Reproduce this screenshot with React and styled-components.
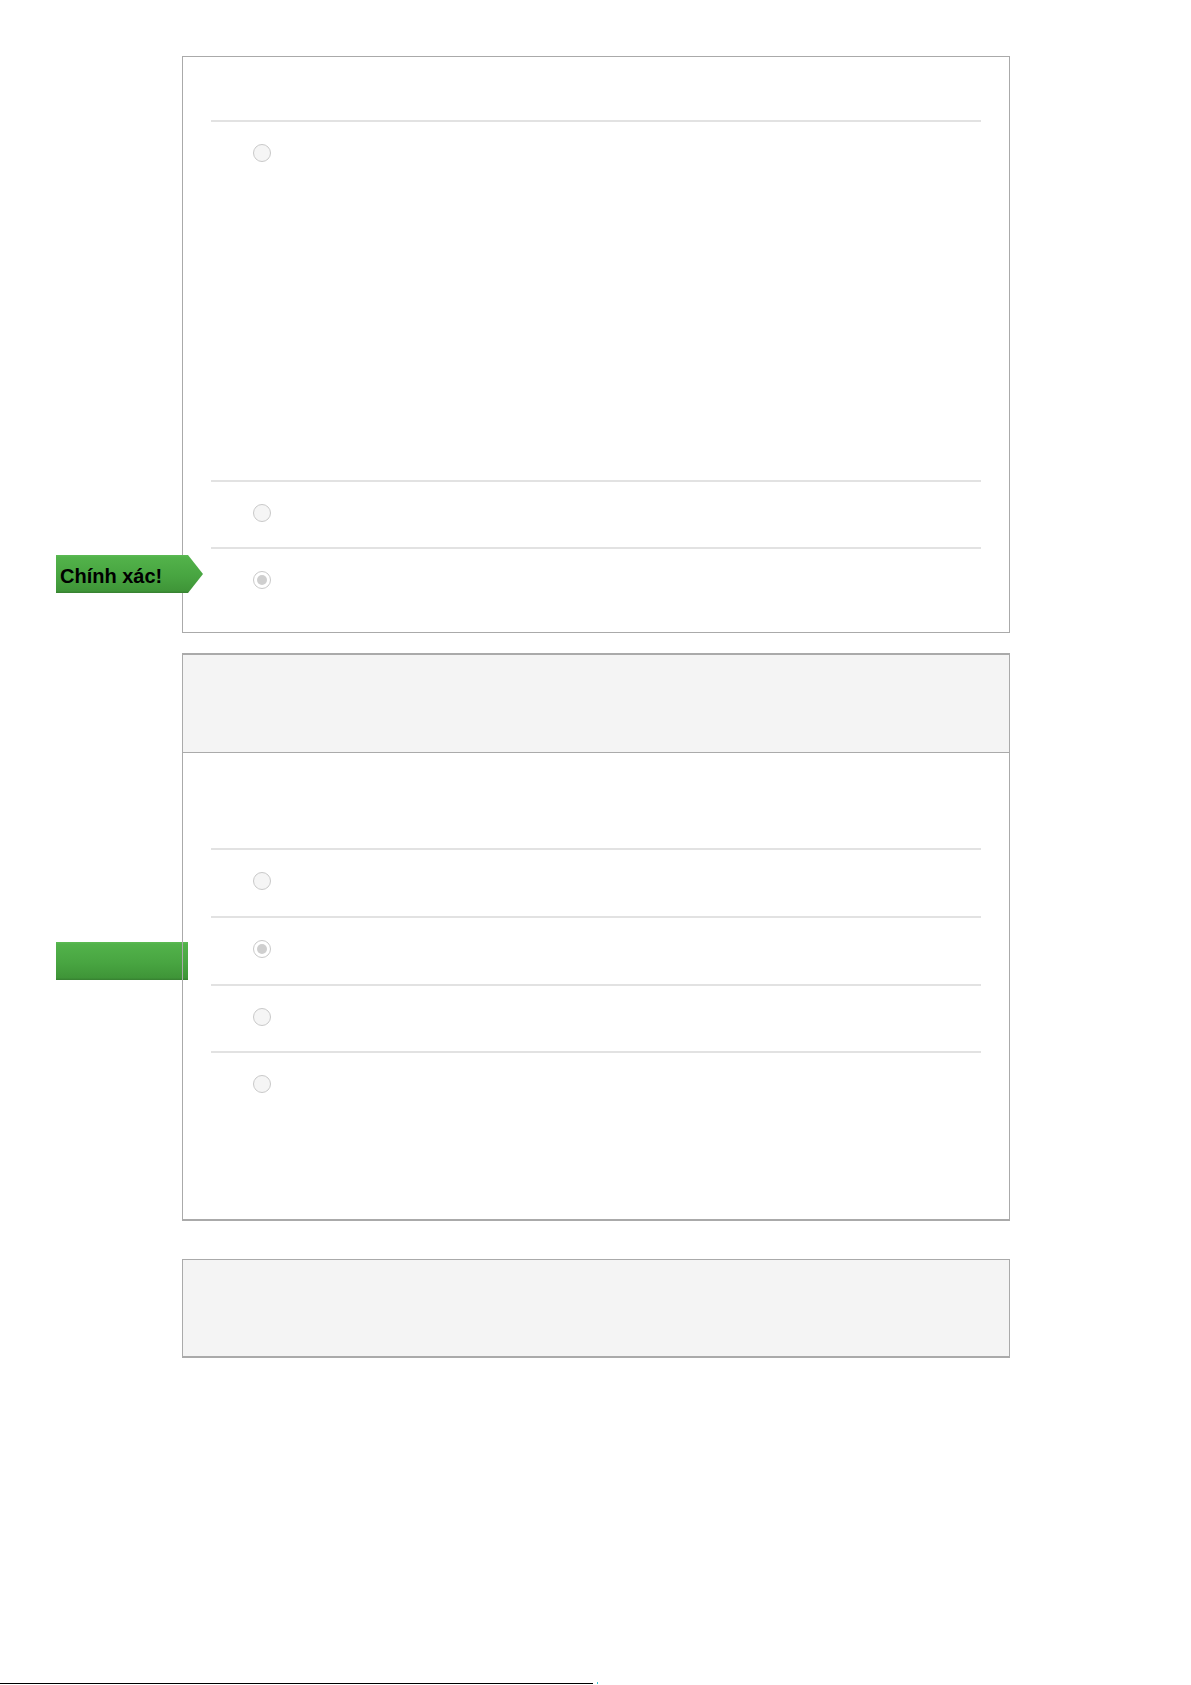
import React from "react";
import styled, { createGlobalStyle } from "styled-components";

const GlobalStyle = createGlobalStyle`
  html, body {
    margin: 0;
    padding: 0;
    background: #ffffff;
    font-family: "Liberation Sans", Arial, sans-serif;
  }
`;

const Page = styled.div`
  min-height: 1685px;
  display: flex;
  flex-direction: column;
  box-sizing: border-box;
  padding-top: 56px;
`;

const Column = styled.div`
  width: 828px;
  margin-left: 182px;
  display: flex;
  flex-direction: column;
`;

const Card = styled.section`
  position: relative;
  box-sizing: border-box;
  background: #ffffff;
  border: 1px solid #aaaaaa;
  border-top-width: ${(p) => p.$topWidth || 1}px;
  border-bottom-width: ${(p) => p.$bottomWidth || 1}px;
  margin-bottom: ${(p) => p.$gap || 0}px;
`;

const CardHeader = styled.div`
  height: 97px;
  background: #f4f4f4;
  border-bottom: 1px solid #aaaaaa;
`;

const Footnote = styled.div`
  height: 96px;
  background: #f4f4f4;
`;

const CardBody = styled.div`
  padding: 0 28px ${(p) => p.$padBottom || 0}px;
`;

const Question = styled.div`
  height: ${(p) => p.$height}px;
`;

const Option = styled.div`
  position: relative;
  box-sizing: border-box;
  border-top: 2px solid #e2e2e2;
  min-height: ${(p) => p.$height}px;
  padding: 22px 0 0 42px;
  display: flex;
  align-items: flex-start;
`;

const Radio = styled.span`
  box-sizing: border-box;
  width: 18px;
  height: 18px;
  border-radius: 50%;
  border: 1px solid #c9c9c9;
  background: ${(p) => (p.$checked ? "#ffffff" : "#f5f5f5")};
  display: flex;
  align-items: center;
  justify-content: center;
  flex-shrink: 0;

  &::after {
    content: "";
    display: ${(p) => (p.$checked ? "block" : "none")};
    width: 10px;
    height: 10px;
    border-radius: 50%;
    background: #cfcfcf;
  }
`;

const Badge = styled.div`
  position: absolute;
  left: -155px;
  top: ${(p) => p.$top}px;
  width: ${(p) => (p.$arrow ? 147 : 132)}px;
  height: 38px;
  box-sizing: border-box;
  padding: 5px 0 0 4px;
  display: flex;
  align-items: center;
  background: linear-gradient(#5cbb54 0, #52b24a 6%, #48a541 55%, #3f9538 94%, #367f30 100%);
  clip-path: ${(p) =>
    p.$arrow
      ? "polygon(0 0, 132px 0, 100% 50%, 132px 100%, 0 100%)"
      : "none"};
  color: #000000;
  font-family: "Liberation Sans", Arial, sans-serif;
  font-weight: bold;
  font-size: 20px;

  &::after {
    content: "";
    display: ${(p) => (p.$arrow ? "none" : "block")};
    position: absolute;
    left: 126px;
    top: 0;
    width: 1px;
    height: 100%;
    background: #aaaaaa;
  }
`;

const FooterRule = styled.div`
  margin-top: auto;
  margin-bottom: 1px;
  width: 593px;
  height: 1px;
  background: #000000;
  position: relative;

  &::after {
    content: "";
    position: absolute;
    left: 597px;
    top: -1px;
    width: 1px;
    height: 2px;
    background: #3cc9d6;
  }
`;

export default function App() {
  return (
    <Page>
      <GlobalStyle />
      <Column>
        <Card $bottomWidth={1} $gap={20}>
          <CardBody $padBottom={18}>
            <Question $height={63} />
            <Option $height={360}>
              <Radio />
            </Option>
            <Option $height={67}>
              <Radio />
            </Option>
            <Option $height={67}>
              <Badge $arrow $top={6}>Chính xác!</Badge>
              <Radio $checked />
            </Option>
          </CardBody>
        </Card>

        <Card $topWidth={2} $bottomWidth={2} $gap={38}>
          <CardHeader />
          <CardBody>
            <Question $height={95} />
            <Option $height={68}>
              <Radio />
            </Option>
            <Option $height={68}>
              <Badge $top={24} />
              <Radio $checked />
            </Option>
            <Option $height={67}>
              <Radio />
            </Option>
            <Option $height={168}>
              <Radio />
            </Option>
          </CardBody>
        </Card>

        <Card $bottomWidth={2}>
          <Footnote />
        </Card>
      </Column>
      <FooterRule />
    </Page>
  );
}
